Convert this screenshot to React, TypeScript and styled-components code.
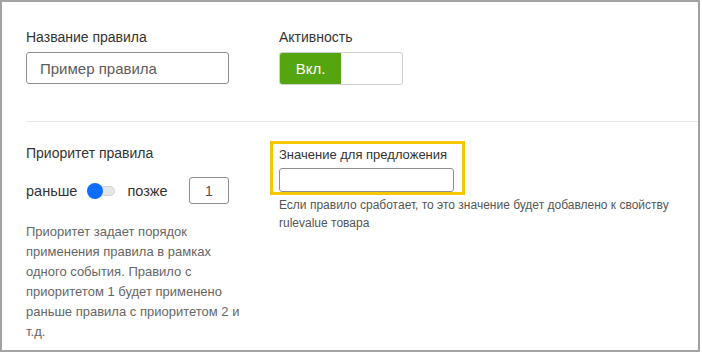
import React from "react";
import styled, { createGlobalStyle } from "styled-components";

const GlobalStyle = createGlobalStyle`
  html, body {
    margin: 0;
    padding: 0;
    background: #fff;
  }
  body {
    font-family: "Liberation Sans", Arial, sans-serif;
    color: #333;
  }
  * {
    box-sizing: border-box;
  }
`;

const Frame = styled.div`
  width: 700px;
  height: 352px;
  border: 2px solid #a3a3a3;
  padding: 26px 0 0 24px;
  overflow: hidden;
`;

const Row = styled.div<{ $top?: number }>`
  display: flex;
  gap: 50px;
  padding-top: ${(p) => p.$top ?? 0}px;
`;

const Col = styled.div<{ $width?: number }>`
  display: flex;
  flex-direction: column;
  width: ${(p) => (p.$width ? `${p.$width}px` : "auto")};
  flex: ${(p) => (p.$width ? "none" : "1")};
`;

const Label = styled.div`
  font-size: 14px;
  line-height: 18px;
  color: #333;
  margin-bottom: 6px;
`;

const TextInput = styled.input`
  width: 100%;
  height: 32px;
  border: 1px solid #8f8f8f;
  border-radius: 3px;
  padding: 0 13px;
  font-family: inherit;
  font-size: 15px;
  color: #555;
  outline: none;
  &::placeholder {
    color: #5c5c5c;
  }
`;

const Toggle = styled.div`
  display: flex;
  width: 124px;
  height: 33px;
  border: 1px solid #cfcfcf;
  border-radius: 3px;
  overflow: hidden;
`;

const ToggleOn = styled.div`
  width: 61px;
  background: #55a511;
  color: #fff;
  font-size: 15px;
  display: flex;
  align-items: center;
  justify-content: center;
`;

const Divider = styled.hr`
  border: none;
  border-top: 1px solid #e8e8e8;
  margin: 36px 0 0;
`;

const PriorityRow = styled.div`
  display: flex;
  align-items: center;
  margin-top: 9px;
  font-size: 14.5px;
  color: #333;
`;

const Switch = styled.div`
  position: relative;
  width: 28px;
  height: 10px;
  margin: 0 12px 0 10px;
  background: #e6e6e6;
  border: 1px solid #d2d2d2;
  border-radius: 5px;
`;

const Knob = styled.span`
  position: absolute;
  left: -1px;
  top: -4px;
  width: 16px;
  height: 16px;
  border-radius: 50%;
  background: #0d6efd;
`;

const NumberBox = styled.input`
  width: 40px;
  height: 27px;
  margin-left: auto;
  border: 1px solid #8f8f8f;
  border-radius: 3px;
  text-align: center;
  font-family: inherit;
  font-size: 14px;
  color: #555;
  outline: none;
`;

const Hint = styled.p<{ $lh: number; $size: number; $top: number; $width?: number }>`
  margin: ${(p) => p.$top}px 0 0;
  width: ${(p) => (p.$width ? `${p.$width}px` : "auto")};
  font-size: ${(p) => p.$size}px;
  line-height: ${(p) => p.$lh}px;
  color: #666;
`;

const Highlight = styled.div`
  margin-left: -9px;
  width: 195px;
  border: 3px solid #f6c700;
  padding: 3px 8px 0 6px;
  margin-top: -3px;
`;

const SmallInput = styled.input`
  width: 100%;
  height: 24px;
  margin-top: 5px;
  border: 1px solid #8f8f8f;
  border-radius: 3px;
  outline: none;
`;

const HighlightLabel = styled.div`
  font-size: 13px;
  line-height: 16px;
  color: #333;
`;

export default function App() {
  return (
    <>
      <GlobalStyle />
      <Frame>
        <Row>
          <Col $width={203}>
            <Label>Название правила</Label>
            <TextInput placeholder="Пример правила" />
          </Col>
          <Col $width={124}>
            <Label>Активность</Label>
            <Toggle>
              <ToggleOn>Вкл.</ToggleOn>
            </Toggle>
          </Col>
        </Row>
        <Divider />
        <Row $top={22}>
          <Col $width={203}>
            <Label>Приоритет правила</Label>
            <PriorityRow>
              раньше
              <Switch>
                <Knob />
              </Switch>
              позже
              <NumberBox defaultValue="1" />
            </PriorityRow>
            <Hint $size={13} $lh={20} $top={18} $width={215}>
              Приоритет задает порядок применения правила в рамках одного
              события. Правило с приоритетом 1 будет применено раньше правила с
              приоритетом 2 и т.д.
            </Hint>
          </Col>
          <Col>
            <Highlight>
              <HighlightLabel>Значение для предложения</HighlightLabel>
              <SmallInput />
            </Highlight>
            <Hint $size={12} $lh={18} $top={1} style={{ color: "#555" }}>
              Если правило сработает, то это значение будет добавлено к свойству
              rulevalue товара
            </Hint>
          </Col>
        </Row>
      </Frame>
    </>
  );
}
